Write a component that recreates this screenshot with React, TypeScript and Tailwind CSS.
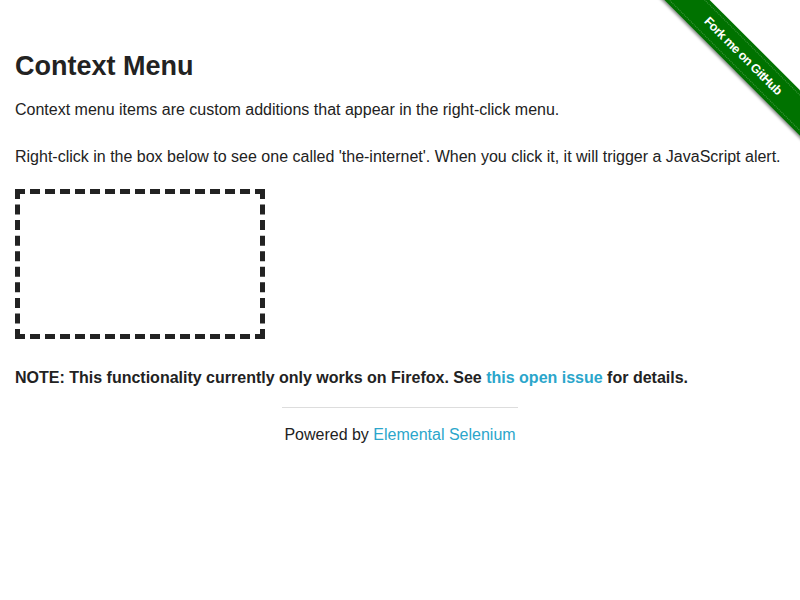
export default function App() {
  return (
    <div className="relative w-[800px] min-h-[600px] bg-white text-[#222] font-['Liberation_Sans',Arial,sans-serif]">
      {/* Fork me ribbon */}
      <div className="pointer-events-none absolute top-0 right-0 w-[149px] h-[149px] overflow-hidden">
        <div className="absolute left-[-28px] top-[40px] w-[240px] h-[32px] rotate-45 bg-[#007200] shadow-[0_2px_3px_rgba(0,0,0,0.45)] flex items-center justify-center">
          <div className="w-full h-[26px] border-y border-dotted border-white/25 flex items-center justify-center">
            <span className="text-white text-[12.5px] font-bold leading-none tracking-[-0.5px]">Fork me on GitHub</span>
          </div>
        </div>
      </div>

      <div className="px-[15px] pt-[48px]">
        <h3 className="text-[27px] font-bold leading-[37.8px]">Context Menu</h3>
        <p className="mt-[11px] text-[16px] leading-[25.6px]">
          Context menu items are custom additions that appear in the right-click menu.
        </p>
        <p className="mt-[22px] text-[16px] leading-[25.6px]">
          Right-click in the box below to see one called 'the-internet'. When you click it, it will trigger a JavaScript alert.
        </p>
        <div className="mt-[19px] w-[250px] h-[150px] border-[5px] border-dashed border-[#222]" />
        <p className="mt-[26px] text-[16px] leading-[25.6px] font-bold">
          NOTE: This functionality currently only works on Firefox. See{' '}
          <a href="#" className="text-[#2ba6cb]">this open issue</a> for details.
        </p>
      </div>

      <div className="mx-auto mt-[16px] w-[236px]">
        <hr className="border-0 border-t border-[#ddd]" />
        <div className="mt-[14px] text-center text-[16px] leading-[25.6px]">
          Powered by <a href="#" className="text-[#2ba6cb]">Elemental Selenium</a>
        </div>
      </div>
    </div>
  );
}
